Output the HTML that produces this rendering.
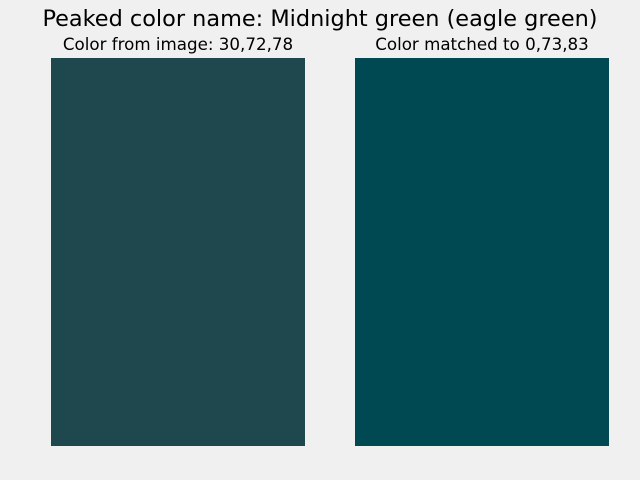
<!DOCTYPE html>
<html><head><meta charset="utf-8"><style>
html,body{margin:0;padding:0;}
body{width:640px;height:480px;background:#f0f0f0;position:relative;overflow:hidden;font-family:"DejaVu Sans","Liberation Sans",sans-serif;color:#000;}
.t{position:absolute;white-space:nowrap;text-align:center;}
.r{position:absolute;}
</style></head><body>
<div class="t" style="left:0;width:640px;top:5px;font-size:22.4px;line-height:28px;">Peaked color name: Midnight green (eagle green)</div>
<div class="t" style="left:51px;width:254px;top:34px;font-size:16.7px;line-height:20px;">Color from image: 30,72,78</div>
<div class="t" style="left:355px;width:254px;top:34px;font-size:16.7px;line-height:20px;">Color matched to 0,73,83</div>
<div class="r" style="left:51px;top:58px;width:254px;height:388px;background:rgb(30,72,78);"></div>
<div class="r" style="left:355px;top:58px;width:254px;height:388px;background:rgb(0,73,83);"></div>
</body></html>
